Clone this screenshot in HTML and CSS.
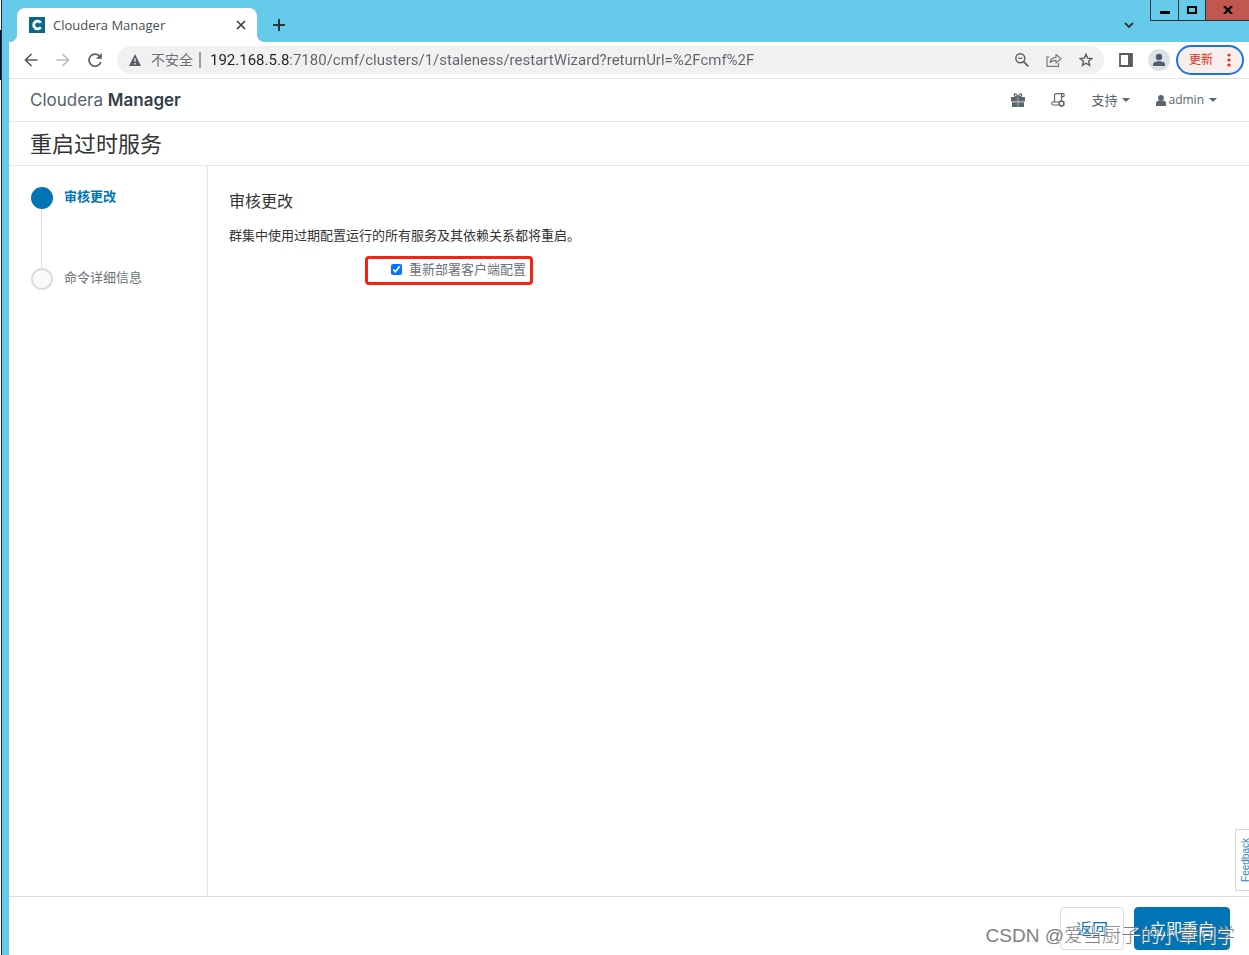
FILE: index.html
```html
<!DOCTYPE html>
<html lang="zh-CN">
<head>
<meta charset="utf-8">
<title>Cloudera Manager</title>
<link rel="stylesheet" href="styles.css">
</head>
<body>
<div class="desktop-edge"></div>
<div class="window">
  <div class="tab-strip">
    <div class="tab">
      <svg class="favicon" viewBox="0 0 16 16"><rect width="16" height="16" fill="#08688c"/><path d="M11.8 5.800A3.900 3.900 0 1 0 11.800 10.200" fill="none" stroke="#fff" stroke-width="2.800"/></svg>
      <span class="tab-title">Cloudera Manager</span>
      <button class="icon-btn tab-close" aria-label="关闭标签页"><svg width="10" height="10" viewBox="0 0 10 10"><path d="M1 1l8 8M9 1L1 9" stroke="#3c4043" stroke-width="1.700"/></svg></button>
    </div>
    <button class="icon-btn new-tab" aria-label="新标签页"><svg width="12" height="12" viewBox="0 0 12 12"><path d="M6 0v12M0 6h12" stroke="#26363f" stroke-width="2"/></svg></button>
    <button class="icon-btn tab-search" aria-label="搜索标签页"><svg width="10" height="7" viewBox="0 0 10 7"><path d="M1 1l4 4 4-4" fill="none" stroke="#26363f" stroke-width="1.800"/></svg></button>
    <div class="window-controls">
      <button class="win-btn win-min" aria-label="最小化"><svg width="10" height="12" viewBox="0 0 10 12"><rect y="7" width="10" height="3"/></svg></button>
      <button class="win-btn win-max" aria-label="最大化"><svg width="10" height="8" viewBox="0 0 10 8"><path d="M1 1h8v6H1z" fill="none" stroke="#000" stroke-width="2"/></svg></button>
      <button class="win-btn win-close" aria-label="关闭"><svg width="10" height="8" viewBox="0 0 10 8"><path d="M1 0l8 8M9 0L1 8" stroke="#000" stroke-width="2.200"/></svg></button>
    </div>
  </div>

  <div class="toolbar">
    <button class="icon-btn nav-btn" aria-label="后退"><svg width="14" height="14" viewBox="0 0 14 14"><path d="M13.500 7H2M7.500 1L1.500 7l6 6" fill="none" stroke="#5a5e63" stroke-width="1.700"/></svg></button>
    <button class="icon-btn nav-btn" aria-label="前进"><svg width="14" height="14" viewBox="0 0 14 14"><path d="M.5 7h12M6.500 1l6 6-6 6" fill="none" stroke="#b9bbbe" stroke-width="1.700"/></svg></button>
    <button class="icon-btn nav-btn" aria-label="重新加载"><svg width="14" height="14" viewBox="0 0 14 14"><path d="M11.800 3.500A6 6 0 1 0 12.800 9" fill="none" stroke="#5a5e63" stroke-width="1.700"/><path d="M13.800 0v5.800H8z" fill="#5a5e63"/></svg></button>
    <div class="omnibox">
      <svg class="warn" width="12" height="12" viewBox="0 0 12 12"><path d="M6 0l6 12H0z" fill="#5a5e63"/><path d="M6 4.200v3.600M6 8.900v1.500" stroke="#f1f1f2" stroke-width="1.300"/></svg>
      <span class="insecure">不安全</span>
      <span class="divider"></span>
      <input class="url" type="text" aria-label="地址" value="192.168.5.8:7180/cmf/clusters/1/staleness/restartWizard?returnUrl=%2Fcmf%2F">
      <button class="icon-btn omni-btn" aria-label="缩放"><svg width="14" height="14" viewBox="0 0 14 14"><circle cx="5.300" cy="5.300" r="4.500" fill="none" stroke="#5a5e63" stroke-width="1.400"/><path d="M3.200 5.300h4.200" stroke="#5a5e63" stroke-width="1.200"/><path d="M8.600 8.600l4.700 4.700" stroke="#5a5e63" stroke-width="1.800"/></svg></button>
      <button class="icon-btn omni-btn" aria-label="分享"><svg width="16" height="14" viewBox="0 0 16 14"><path d="M3.500 4H1v9.300h11.500V10" fill="none" stroke="#777b80" stroke-width="1.200"/><path d="M4 9.500c.5-3.500 2.700-5 6-5.200V1.500l5 4.300-5 4.300V7.300C7.500 7.300 5.500 8 4 9.500z" fill="none" stroke="#777b80" stroke-width="1.200" stroke-linejoin="round"/></svg></button>
      <button class="icon-btn omni-btn" aria-label="收藏"><svg width="14" height="14" viewBox="0 0 14 14"><path d="M7 1.300l1.600 3.900 4.200.3-3.200 2.700 1 4.200L7 10.200l-3.600 2.200 1-4.200L1.200 5.500l4.200-.3z" fill="none" stroke="#5a5e63" stroke-width="1.400"/></svg></button>
    </div>
    <button class="icon-btn side-panel" aria-label="侧边栏"><svg width="14" height="14" viewBox="0 0 14 14"><path d="M1 1h12v12H1z" fill="none" stroke="#5a5e63" stroke-width="1.800"/><path d="M9 1h4v12H9z" fill="#5a5e63"/></svg></button>
    <button class="icon-btn avatar" aria-label="个人资料"><svg width="14" height="14" viewBox="0 0 14 14"><circle cx="7" cy="4" r="3.200" fill="#4f5b6e"/><path d="M1 13v-1.500C1 9.500 4 8.300 7 8.300s6 1.200 6 3.200V13z" fill="#4f5b6e"/></svg></button>
    <button class="update"><span>更新</span><svg width="4" height="14" viewBox="0 0 4 14"><g fill="#d93025"><circle cx="2" cy="2" r="1.600"/><circle cx="2" cy="7" r="1.600"/><circle cx="2" cy="12" r="1.600"/></g></svg></button>
  </div>

  <header class="app-header">
    <a class="brand" href="#">Cloudera <b>Manager</b></a>
    <nav class="app-nav">
      <a href="#" aria-label="新功能"><svg width="14" height="14" viewBox="0 0 14 14"><path d="M0 4h14v4.600H0zM1 9.200h12V14H1z" fill="#5a656d"/><path d="M7 4v10" stroke="#aeb4b8" stroke-width="1"/><path d="M7 4C5.500.3 3.200 0 3.200 2c0 1.400 1.500 2 3.800 2zM7 4C8.500.3 10.800 0 10.800 2c0 1.400-1.500 2-3.800 2z" fill="none" stroke="#5a656d" stroke-width="1.200"/></svg></a>
      <a href="#" aria-label="正在运行的命令"><svg width="14" height="14" viewBox="0 0 14 14"><path d="M3.500 9V2.500C3.500 1.300 4.200.7 5.300.7h6.900c1.300 0 1.300 3 0 3h-1.700V7M10.500 3.700V2.200c0-.9.600-1.500 1.500-1.500M7.500 12H2C.4 12 .4 9 2 9h5.500" fill="none" stroke="#5a656d" stroke-width="1.200"/><circle cx="10.500" cy="10.500" r="2.400" fill="none" stroke="#5a656d" stroke-width="1.500"/><path d="M10.500 7v1.500M10.500 12.500V14M7.500 8.800l1.300.7M12.200 11.500l1.300.7M13.500 8.800l-1.300.7M8.800 11.500l-1.300.7" stroke="#5a656d"/></svg></a>
      <a href="#">支持<i class="caret"></i></a>
      <a class="account" href="#"><svg class="user" width="10" height="11" viewBox="0 0 10 11"><circle cx="5" cy="3" r="2.900" fill="#5a656d"/><path d="M0 11V8.500C0 6.500 1.500 5.500 3 5.500c1 .8 3 .8 4 0 1.500 0 3 1 3 3V11z" fill="#5a656d"/></svg>admin<i class="caret"></i></a>
    </nav>
  </header>
  <h1 class="page-title">重启过时服务</h1>

  <div class="wizard">
    <ol class="steps">
      <li class="step current"><span class="dot"></span><span>审核更改</span></li>
      <li class="step"><span class="dot"></span><span>命令详细信息</span></li>
    </ol>
    <main class="content">
      <h2>审核更改</h2>
      <p>群集中使用过期配置运行的所有服务及其依赖关系都将重启。</p>
      <label class="redeploy"><input type="checkbox" checked><span>重新部署客户端配置</span></label>
    </main>
  </div>
  <footer class="actions">
    <button class="btn">返回</button>
    <button class="btn primary">立即重启</button>
  </footer>
</div>
<button class="feedback">Feedback</button>
<div class="watermark">CSDN @爱当厨子的小章同学</div>
</body>
</html>
```
FILE: styles.css
```css
* { box-sizing: border-box; }
body {
  margin: 0;
  min-height: 100vh;
  display: flex;
  position: relative;
  overflow: hidden;
  background: #fff;
  color: #333;
  font: 13px/20px "Open Sans", "Noto Sans CJK SC", sans-serif;
}
button, input { font: inherit; }
a { color: inherit; text-decoration: none; }
svg { display: block; flex: none; }

.desktop-edge {
  flex: none;
  width: 2px;
  border-right: 1px solid #1c2b33;
  background: linear-gradient(#fff 30px, #06123a 30px, #06123a 80px, #fff 80px);
}
.window {
  flex: 1;
  min-width: 0;
  display: flex;
  flex-direction: column;
  border-left: 7px solid #66caea;
  background: #fff;
}
.icon-btn {
  display: flex;
  align-items: center;
  justify-content: center;
  padding: 0;
  border: 0;
  background: none;
}

.tab-strip {
  display: flex;
  height: 42px;
  padding-left: 8px;
  background: #66caea;
}
.tab {
  display: flex;
  align-items: center;
  width: 240px;
  height: 34px;
  margin-top: 8px;
  padding: 0 11px 0 12px;
  border-radius: 8px 8px 0 0;
  background: #fff;
  position: relative;
}
.tab::before, .tab::after {
  content: "";
  position: absolute;
  bottom: 0;
  width: 8px;
  height: 8px;
}
.tab::before { right: 100%; background: radial-gradient(circle at 0 0, transparent 8px, #fff 8px); }
.tab::after { left: 100%; background: radial-gradient(circle at 100% 0, transparent 8px, #fff 8px); }
.favicon { width: 16px; height: 16px; }
.tab-title { flex: 1; margin-left: 8px; color: #4a4d51; }
.new-tab { width: 28px; height: 34px; margin: 8px 0 0 8px; }
.tab-search { width: 28px; height: 34px; margin: 8px 7px 0 auto; }
.window-controls { display: flex; height: 21px; border: solid #26363f; border-width: 0 0 1px 1px; }
.win-btn {
  display: flex;
  align-items: center;
  justify-content: center;
  width: 27px;
  padding: 0;
  border: 0;
  border-right: 1px solid #26363f;
  background: #66caea;
}
.win-min { width: 28px; }
.win-close { width: 43px; border: 0; background: #c15850; }

.toolbar {
  display: flex;
  align-items: center;
  height: 37px;
  padding: 0 5px 0 6px;
  border-bottom: 1px solid #e1e2e4;
}
.nav-btn { width: 32px; height: 32px; }
.omnibox {
  flex: 1;
  display: flex;
  align-items: center;
  min-width: 0;
  height: 28px;
  margin-left: 6px;
  padding: 0 2px 0 12px;
  border-radius: 14px;
  background: #f1f1f2;
}
.insecure { margin-left: 10px; font-size: 14px; color: #6b6e73; white-space: nowrap; }
.divider { width: 2px; height: 16px; margin: 0 9px 0 6px; background: #9a9da1; }
.url {
  flex: 1;
  min-width: 0;
  height: 24px;
  padding: 0;
  border: 0;
  outline: 0;
  font-family: Roboto, sans-serif;
  font-size: 15px;
  color: #5f6368;
  -webkit-text-fill-color: transparent;
  background: linear-gradient(90deg, #202124 79px, #5f6368 79px);
  background-clip: text;
  -webkit-background-clip: text;
}
.omni-btn { width: 32px; height: 28px; }
.side-panel { width: 28px; height: 28px; margin-left: 8px; }
.avatar { width: 22px; height: 22px; margin: 0 6px 0 8px; border-radius: 50%; background: #dee1e6; }
.update {
  display: flex;
  align-items: center;
  gap: 14px;
  height: 30px;
  padding: 0 11px;
  border: 2px solid #1a73e8;
  border-radius: 15px;
  background: #f8eeec;
  color: #d93025;
  font-size: 12px;
  white-space: nowrap;
}

.app-header {
  display: flex;
  align-items: center;
  justify-content: space-between;
  height: 43px;
  padding: 0 32px 0 21px;
  border-bottom: 1px solid #e5e6e7;
}
.brand { font: 17px/24px Inter, sans-serif; color: #56616a; }
.brand b { font-weight: 600; color: #323e48; }
.app-nav { display: flex; align-items: center; gap: 26px; color: #5a656d; }
.app-nav a { display: flex; align-items: center; }
.app-nav .account { font-size: 12px; }
.caret { margin-left: 5px; border: 4px solid transparent; border-top-color: #5a656d; border-bottom: 0; }
.user { margin-right: 2px; }
.page-title {
  margin: 0;
  padding: 5px 21px 6px;
  border-bottom: 1px solid #e5e6e7;
  font-size: 22px;
  line-height: 32px;
  font-weight: 400;
}

.wizard { flex: 1; display: flex; }
.steps {
  flex: none;
  width: 199px;
  margin: 0;
  padding: 21px 22px;
  border-right: 1px solid #e1e2e4;
  list-style: none;
  color: #6c7278;
  line-height: 18px;
}
.step { display: flex; align-items: flex-start; gap: 11px; height: 81px; position: relative; }
.dot { width: 22px; height: 22px; border: 2px solid #dcdcdc; border-radius: 50%; background: #fafafa; }
.current { color: #0074b4; font-weight: 700; }
.current .dot { border-color: #0074b4; background: #0074b4; }
.current::after { content: ""; position: absolute; left: 10px; top: 22px; bottom: 0; width: 1px; background: #dcdcdc; }
.content { flex: 1; padding: 23px 21px; }
.content h2 { margin: 0 0 12px; font-size: 16px; line-height: 24px; font-weight: 400; }
.content p { margin: 0 0 11px; }
.redeploy {
  display: flex;
  align-items: center;
  gap: 7px;
  width: 168px;
  height: 29px;
  margin-left: 136px;
  padding: 0 0 3px 23px;
  border: 3px solid #fb2010;
  border-radius: 4px;
  color: #6c7278;
  white-space: nowrap;
}
.redeploy input { flex: none; width: 11px; height: 11px; margin: 0; accent-color: #0075ff; }

.actions {
  display: flex;
  justify-content: flex-end;
  gap: 10px;
  height: 59px;
  padding: 10px 19px 5px;
  border-top: 1px solid #d9dadb;
}
.btn {
  height: 43px;
  padding: 0 15px;
  border: 1px solid #dcdcdc;
  border-radius: 4px;
  background: #fff;
  color: #0074b4;
  font-size: 16px;
}
.primary { border-color: #0074b4; background: #0074b4; color: #fff; }

.feedback {
  position: absolute;
  right: 0;
  bottom: 64px;
  width: 14px;
  height: 62px;
  padding: 0 0 0 2px;
  border: 1px solid #d5d8da;
  border-right: 0;
  background: #fff;
  color: #2a86bd;
  font: 10px/16px "Liberation Sans", sans-serif;
  writing-mode: sideways-lr;
}
.watermark {
  position: absolute;
  right: 14px;
  bottom: 6px;
  color: #808080;
  font: 300 19px/26px "Liberation Sans", "Noto Sans CJK SC", sans-serif;
  text-shadow: 1px 1px 0 #fff;
  white-space: nowrap;
  pointer-events: none;
}
```
